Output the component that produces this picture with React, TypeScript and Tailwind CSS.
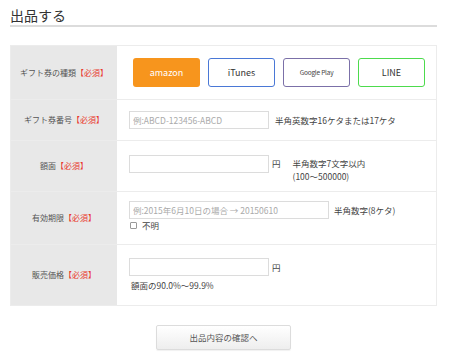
import React from 'react';

const jp = { fontFamily: '"Noto Sans CJK JP", "Noto Sans", sans-serif' };

const Required = () => <span className="text-[#e8392f]">【必須】</span>;

const Row: React.FC<{ label: string; h: string; last?: boolean; children: React.ReactNode }> = ({
  label,
  h,
  last,
  children,
}) => (
  <div className={`flex ${h} ${last ? '' : 'border-b border-[#ececec]'}`}>
    <div className="w-[106px] shrink-0 bg-[#e8e8e8] flex items-center justify-center text-[8px] text-[#555]">
      {label}
      <Required />
    </div>
    <div className="flex-1 flex items-center pl-[12px]">{children}</div>
  </div>
);

const inputCls =
  'h-[18px] border border-[#dcdcdc] bg-white px-[3px] text-[8.5px] text-[#555] placeholder:text-[#aaa] outline-none';

const App = () => {
  return (
    <div className="w-[450px] h-[360px] bg-white" style={jp}>
      <div className="ml-[10px] w-[427px]">
        <h1 className="pt-[5px] text-[14px] leading-[20px] text-[#333] font-normal">出品する</h1>
        <div className="h-[2px] bg-[#dcdcdc]" />

        <div className="mt-[18px] border border-[#ececec]">
          <Row label="ギフト券の種類" h="h-[54px]">
            <div className="flex gap-[8px] pl-[4px]">
              <button className="w-[67px] h-[29px] rounded-[3px] bg-[#f7951d] text-white text-[9px]">
                amazon
              </button>
              <button className="w-[67px] h-[29px] rounded-[3px] border-[1.5px] border-[#4a78d6] text-[#333] text-[9px]">
                iTunes
              </button>
              <button className="w-[67px] h-[29px] rounded-[3px] border-[1.5px] border-[#7b70a8] text-[#444] text-[6.5px] tracking-[-0.2px]">
                Google Play
              </button>
              <button className="w-[67px] h-[29px] rounded-[3px] border-[1.5px] border-[#4ddb4d] text-[#333] text-[9px]">
                LINE
              </button>
            </div>
          </Row>

          <Row label="ギフト券番号" h="h-[41px]">
            <input className={`${inputCls} w-[140px]`} placeholder="例:ABCD-123456-ABCD" />
            <span className="ml-[6px] text-[8.5px] text-[#444]">半角英数字16ケタまたは17ケタ</span>
          </Row>

          <Row label="額面" h="h-[51px]">
            <div className="flex items-start pt-[6px]">
              <input className={`${inputCls} w-[140px]`} />
              <span className="ml-[3px] mt-[2px] text-[8.5px] text-[#444]">円</span>
              <div className="ml-[12px] mt-[2px] text-[8.5px] leading-[13px] text-[#444]">
                <div>半角数字7文字以内</div>
                <div>(100～500000)</div>
              </div>
            </div>
          </Row>

          <Row label="有効期限" h="h-[53px]">
            <div className="flex flex-col -mt-[4px]">
              <div className="flex items-center">
                <input
                  className={`${inputCls} w-[200px] h-[17px]`}
                  placeholder="例:2015年6月10日の場合 → 20150610"
                />
                <span className="ml-[5px] text-[8.5px] text-[#444]">半角数字(8ケタ)</span>
              </div>
              <div className="flex items-center text-[8.5px] leading-[12px] text-[#444]">
                <span className="ml-[1px] w-[7px] h-[7px] border border-[#999] rounded-[1px] bg-white" />
                <span className="ml-[5px]">不明</span>
              </div>
            </div>
          </Row>

          <Row label="販売価格" h="h-[60px]" last>
            <div className="flex flex-col">
              <div className="flex items-center">
                <input className={`${inputCls} w-[140px]`} />
                <span className="ml-[3px] text-[8.5px] text-[#444]">円</span>
              </div>
              <div className="mt-[3px] ml-[2px] text-[8.5px] text-[#444]">額面の90.0%～99.9%</div>
            </div>
          </Row>
        </div>

        <div className="flex justify-center mt-[19px]">
          <button className="w-[135px] h-[25px] rounded-[2px] border border-[#dcdcdc] bg-gradient-to-b from-white to-[#eeeeee] text-[8.5px] text-[#555] shadow-[0_1px_1px_rgba(0,0,0,0.06)]">
            出品内容の確認へ
          </button>
        </div>
      </div>
    </div>
  );
};

export default App;
